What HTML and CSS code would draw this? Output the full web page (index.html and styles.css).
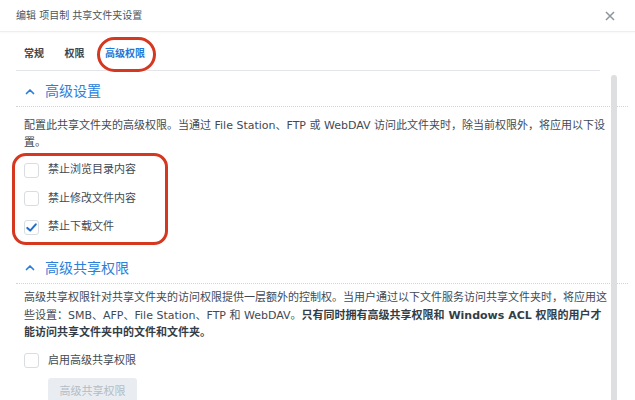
FILE: index.html
```html
<!DOCTYPE html>
<html lang="zh-CN">
<head>
<meta charset="utf-8">
<title>编辑 项目制 共享文件夹设置</title>
<link rel="stylesheet" href="styles.css">
</head>
<body>
<div class="dialog">
  <header class="titlebar">
    <span class="title">编辑 项目制 共享文件夹设置</span>
    <svg class="close" width="10" height="10" viewBox="0 0 10 10"><path d="M1 1L9 9M9 1L1 9"/></svg>
  </header>
  <nav class="tabs">
    <span class="tab">常规</span>
    <span class="tab">权限</span>
    <span class="tab active">高级权限<span class="oval"></span></span>
  </nav>
  <main class="content">
    <h2 class="sec-head">
      <svg class="chev" width="10" height="7" viewBox="0 0 10 7"><path d="M1.5 5.5L5 2L8.5 5.5"/></svg>
      高级设置
    </h2>
    <p class="desc">配置此共享文件夹的高级权限。当通过 File Station、FTP 或 WebDAV 访问此文件夹时，除当前权限外，将应用以下设<br>置。</p>
    <div class="checks">
      <label class="check"><span class="box"></span>禁止浏览目录内容</label>
      <label class="check"><span class="box"></span>禁止修改文件内容</label>
      <label class="check"><span class="box checked"><svg width="13" height="13" viewBox="0 0 13 13"><path d="M2.3 6.9L5.2 9.6L10.8 3.3"/></svg></span>禁止下载文件</label>
      <span class="rect"></span>
    </div>
    <h2 class="sec-head sec-two">
      <svg class="chev" width="10" height="7" viewBox="0 0 10 7"><path d="M1.5 5.5L5 2L8.5 5.5"/></svg>
      高级共享权限
    </h2>
    <p class="desc desc-two">高级共享权限针对共享文件夹的访问权限提供一层额外的控制权。当用户通过以下文件服务访问共享文件夹时，将应用这些设置：SMB、AFP、File Station、FTP 和 WebDAV。<b>只有同时拥有高级共享权限和 Windows ACL 权限的用户才能访问共享文件夹中的文件和文件夹。</b></p>
    <div class="checks checks-two">
      <label class="check"><span class="box"></span>启用高级共享权限</label>
    </div>
    <button class="btn" disabled>高级共享权限</button>
  </main>
  <div class="scrollbar"></div>
</div>
</body>
</html>
```
FILE: styles.css
```css
* { box-sizing: border-box; }
html, body {
  margin: 0;
  padding: 0;
  background: #ffffff;
}
body {
  font-family: "DejaVu Sans", "Noto Sans CJK SC", sans-serif;
  font-size: 11px;
  color: #3f4a54;
}
.dialog {
  position: relative;
  width: 635px;
  height: 400px;
  overflow: hidden;
  background: #fff;
}
.titlebar {
  height: 32px;
  display: flex;
  align-items: center;
  justify-content: space-between;
  padding: 0 20px 0 16px;
  border-bottom: 1px solid #eceef0;
  box-shadow: 0 1px 2px rgba(0,0,0,0.03);
}
.title {
  font-size: 10px;
  color: #4a5560;
  line-height: 16px;
  padding-top: 1px;
}
.close path {
  stroke: #8c959e;
  stroke-width: 1.5;
  fill: none;
}
.tabs {
  display: flex;
  gap: 20.5px;
  margin: 0 35px 0 16px;
  padding: 14px 0 8px 8px;
  border-bottom: 1px solid #e2e6ea;
}
.tab {
  position: relative;
  font-size: 10px;
  line-height: 16px;
  font-weight: 700;
  color: #3c4650;
}
.tab.active { color: #1e78d6; }
.oval {
  position: absolute;
  left: -8px;
  top: -9px;
  width: 59px;
  height: 35px;
  border: 3px solid #d5371f;
  border-radius: 18px;
}
.content {
  padding: 10px 28px 0 16px;
}
.sec-head {
  margin: 0 -21px 0 0;
  padding: 0 0 5px 8px;
  display: flex;
  align-items: center;
  height: 26px;
  font-size: 14px;
  line-height: 20px;
  font-weight: 400;
  color: #2b80da;
  border-bottom: 1px dotted #cfd5db;
}
.chev {
  margin: 0 10px 0 1px;
}
.chev path {
  stroke: #2b80da;
  stroke-width: 1.7;
  fill: none;
  stroke-linecap: round;
  stroke-linejoin: round;
}
.sec-two { margin-top: 16px; }
.desc {
  margin: 9.5px 0 0 0;
  padding-left: 8px;
  line-height: 17.5px;
}
.desc b { font-weight: 700; color: #333d47; }
.desc-two { margin-top: 5.5px; }
.checks {
  position: relative;
  margin-top: 4.5px;
  padding-left: 8px;
  display: flex;
  flex-direction: column;
}
.checks-two { margin-top: 4.75px; }
.check {
  display: flex;
  align-items: center;
  height: 28.5px;
  gap: 9px;
  line-height: 16px;
  color: #3f4a54;
}
.box {
  width: 15px;
  height: 15px;
  border: 1px solid #d8dde2;
  border-radius: 3px;
  background: #fff;
  display: flex;
  align-items: center;
  justify-content: center;
}
.box svg path {
  stroke: #1d6fce;
  stroke-width: 2;
  fill: none;
  stroke-linecap: round;
  stroke-linejoin: round;
}
.rect {
  position: absolute;
  left: -4px;
  top: -3px;
  width: 156px;
  height: 92px;
  border: 3px solid #d5371f;
  border-radius: 14px;
  pointer-events: none;
}
.btn {
  display: block;
  margin: 2.75px 0 0 32px;
  width: 89px;
  height: 24px;
  border: none;
  border-radius: 3px;
  background: #e9edf1;
  color: #b3bcc5;
  font-family: inherit;
  font-size: 11px;
  padding: 0;
}
.scrollbar {
  position: absolute;
  left: 611px;
  top: 75px;
  width: 6px;
  height: 340px;
  border-radius: 3px;
  background: #dedfe0;
}
```
